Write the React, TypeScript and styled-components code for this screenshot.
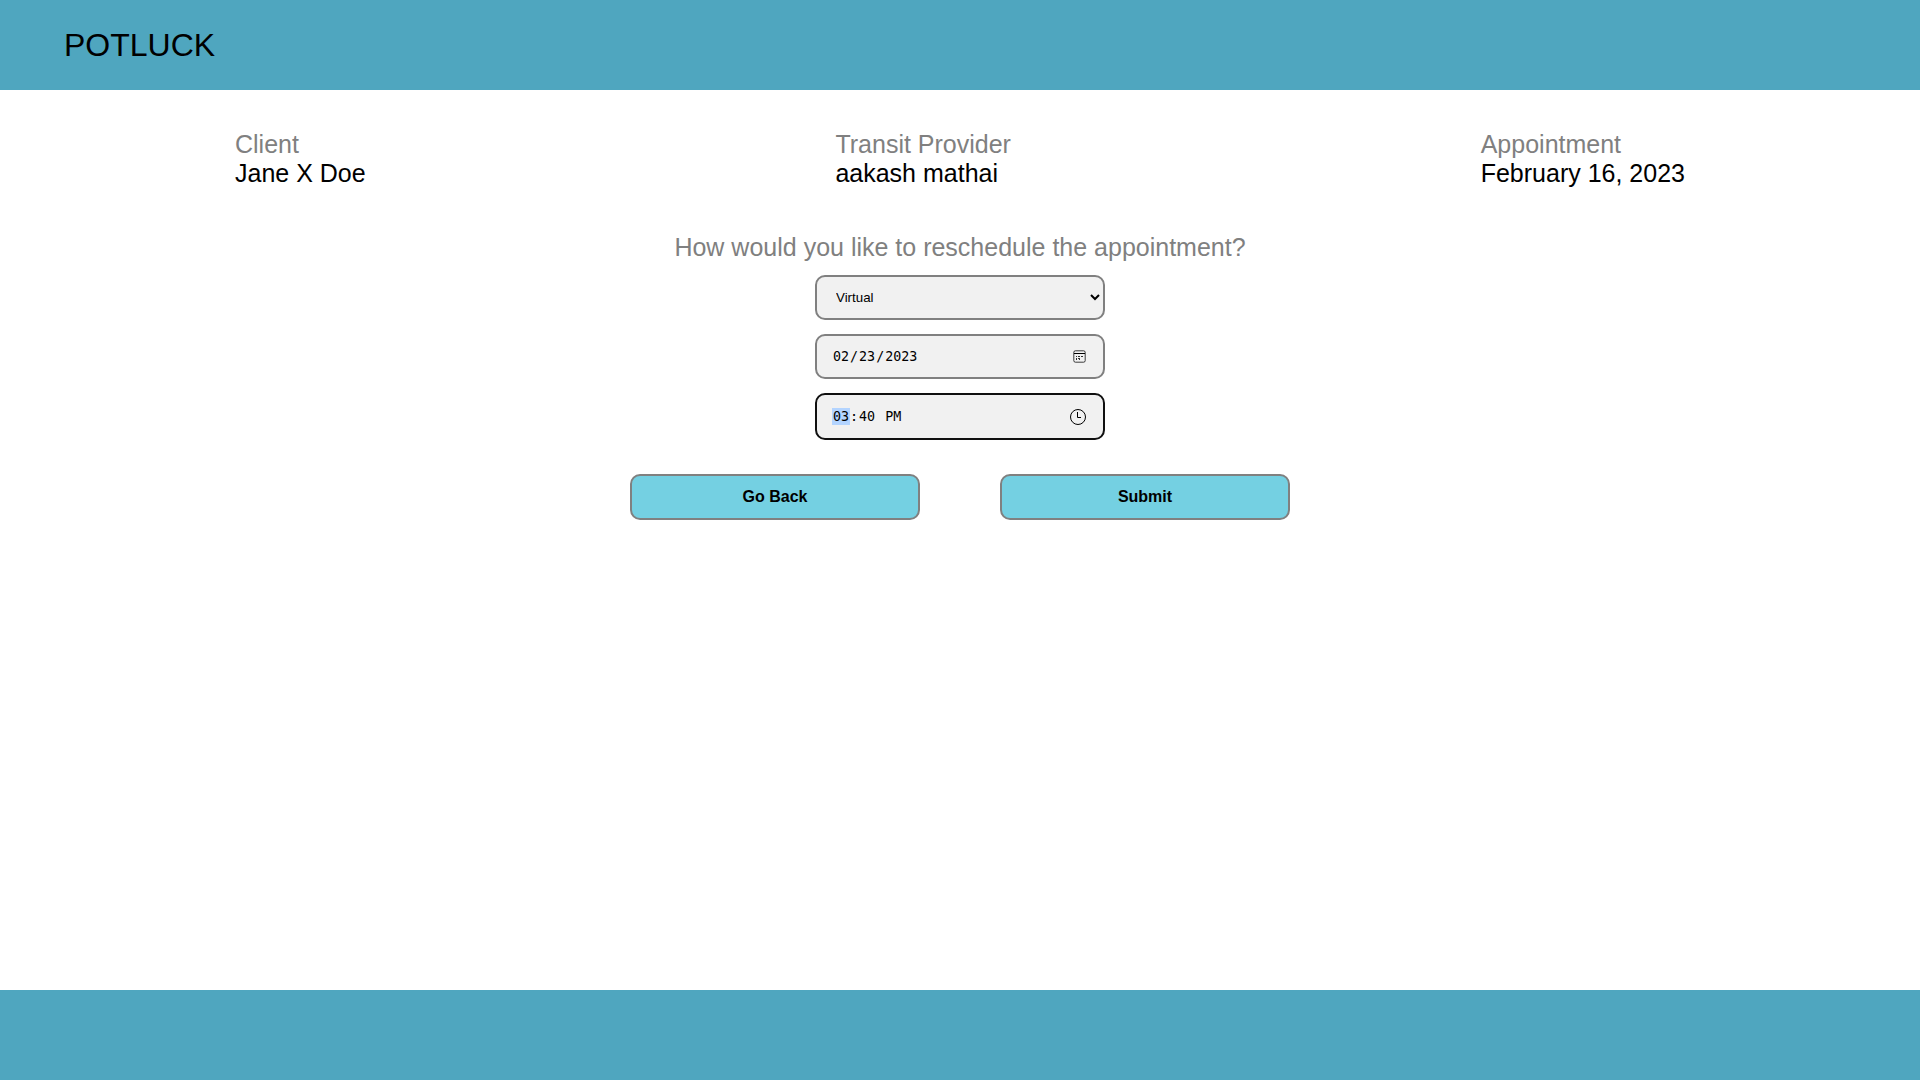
import React, { useEffect, useRef } from "react";
import styled, { createGlobalStyle } from "styled-components";

const svgUrl = (markup: string) => `url("data:image/svg+xml,${encodeURIComponent(markup).replace(/'/g, "%27")}")`;

const calendarIcon = svgUrl(
  `<svg xmlns="http://www.w3.org/2000/svg" width="13" height="13" viewBox="0 0 13 13"><rect x=".8" y=".8" width="11.4" height="11.4" rx="1.6" fill="none" stroke="#000" stroke-opacity=".75"/><path d="M1 3.5h11" stroke="#000"/><path d="M3 6h1v1H3zM5 6h1v1H5zM6 6h1v1H6zM8 6h1v1H8zM9 6h1v1H9zM3 8h1v1H3zM5 8h1v1H5zM6 8h1v1H6zM3 9h1v1H3zM6 9h1v1H6z" fill="#000" fill-opacity=".8"/></svg>`
);

const clockIcon = svgUrl(
  `<svg xmlns="http://www.w3.org/2000/svg" width="16" height="16" viewBox="0 0 16 16" fill="none" stroke="#000"><circle cx="8" cy="8" r="7.5"/><path d="M7.5 3v5.5H11"/></svg>`
);

const GlobalStyle = createGlobalStyle`
  body {
    margin: 0;
    background: #ffffff;
    color: #000000;
    font-family: "Liberation Sans", Arial, sans-serif;
  }
`;

const Page = styled.div`
  display: flex;
  flex-direction: column;
  min-height: 100vh;
`;

const Header = styled.header`
  display: flex;
  align-items: center;
  height: 90px;
  padding: 0 64px;
  background: #4fa6bf;
`;

const Brand = styled.h1`
  margin: 0;
  font-size: 32px;
  font-weight: 400;
`;

const Main = styled.main`
  flex: 1;
`;

const Summary = styled.dl`
  display: flex;
  justify-content: space-between;
  margin: 40px 235px 0;
  font-size: 25px;
  line-height: 29px;
`;

const SummaryLabel = styled.dt`
  color: #808080;
`;

const SummaryValue = styled.dd`
  margin: 0;
`;

const Form = styled.form`
  display: flex;
  flex-direction: column;
  align-items: center;
  margin-top: 45px;
`;

const Fields = styled.fieldset`
  display: flex;
  flex-direction: column;
  align-items: center;
  gap: 14px;
  margin: 0;
  padding: 0;
  border: 0;
`;

const Question = styled.legend`
  padding: 0 0 13px;
  color: #808080;
  font-size: 25px;
  line-height: 29px;
`;

const Select = styled.select`
  box-sizing: border-box;
  width: 290px;
  height: 45px;
  padding: 0 0 0 15px;
  border: 2px solid #808080;
  border-radius: 10px;
  background: #f1f1f1;
  color: #000000;
  font-family: "Liberation Sans", Arial, sans-serif;
`;

const Input = styled.input<{ $icon: string; $iconSize: number; $height: number }>`
  box-sizing: border-box;
  width: 290px;
  height: ${(p) => p.$height}px;
  padding: 0 15px;
  border: 2px solid #808080;
  border-radius: 10px;
  background: #f1f1f1;
  color: #000000;
  font-family: "DejaVu Sans Mono", monospace;

  &:focus {
    border-color: #101010;
    outline: none;
  }

  &:focus::-webkit-datetime-edit-hour-field {
    background-image: linear-gradient(#b3d4ff, #b3d4ff);
    -webkit-text-fill-color: #000000;
  }

  &::-webkit-calendar-picker-indicator {
    box-sizing: content-box;
    width: ${(p) => p.$iconSize}px;
    height: ${(p) => p.$iconSize}px;
    padding: 2px;
    background: ${(p) => p.$icon} center / ${(p) => p.$iconSize}px no-repeat;
  }
`;

const Actions = styled.div`
  display: flex;
  justify-content: center;
  gap: 80px;
  margin-top: 34px;
`;

const Button = styled.button`
  width: 290px;
  height: 46px;
  padding: 0;
  border: 2px solid #808080;
  border-radius: 10px;
  background: #74d0e2;
  color: #000000;
  font-family: "Liberation Sans", Arial, sans-serif;
  font-size: 16px;
  font-weight: 700;
`;

const Footer = styled.footer`
  height: 90px;
  background: #4fa6bf;
`;

const details = [
  { label: "Client", value: "Jane X Doe" },
  { label: "Transit Provider", value: "aakash mathai" },
  { label: "Appointment", value: "February 16, 2023" },
];

export default function App() {
  const timeRef = useRef<HTMLInputElement>(null);

  useEffect(() => {
    timeRef.current?.focus();
  }, []);

  return (
    <Page>
      <GlobalStyle />
      <Header>
        <Brand>POTLUCK</Brand>
      </Header>
      <Main>
        <Summary>
          {details.map((item) => (
            <div key={item.label}>
              <SummaryLabel>{item.label}</SummaryLabel>
              <SummaryValue>{item.value}</SummaryValue>
            </div>
          ))}
        </Summary>
        <Form onSubmit={(event) => event.preventDefault()}>
          <Fields>
            <Question>How would you like to reschedule the appointment?</Question>
            <Select aria-label="Appointment type" defaultValue="virtual">
              <option value="virtual">Virtual</option>
              <option value="in-person">In Person</option>
            </Select>
            <Input
              type="date"
              aria-label="Date"
              defaultValue="2023-02-23"
              $icon={calendarIcon}
              $iconSize={13}
              $height={45}
            />
            <Input
              ref={timeRef}
              type="time"
              aria-label="Time"
              defaultValue="15:40"
              $icon={clockIcon}
              $iconSize={16}
              $height={47}
            />
          </Fields>
          <Actions>
            <Button type="button">Go Back</Button>
            <Button type="submit">Submit</Button>
          </Actions>
        </Form>
      </Main>
      <Footer />
    </Page>
  );
}
